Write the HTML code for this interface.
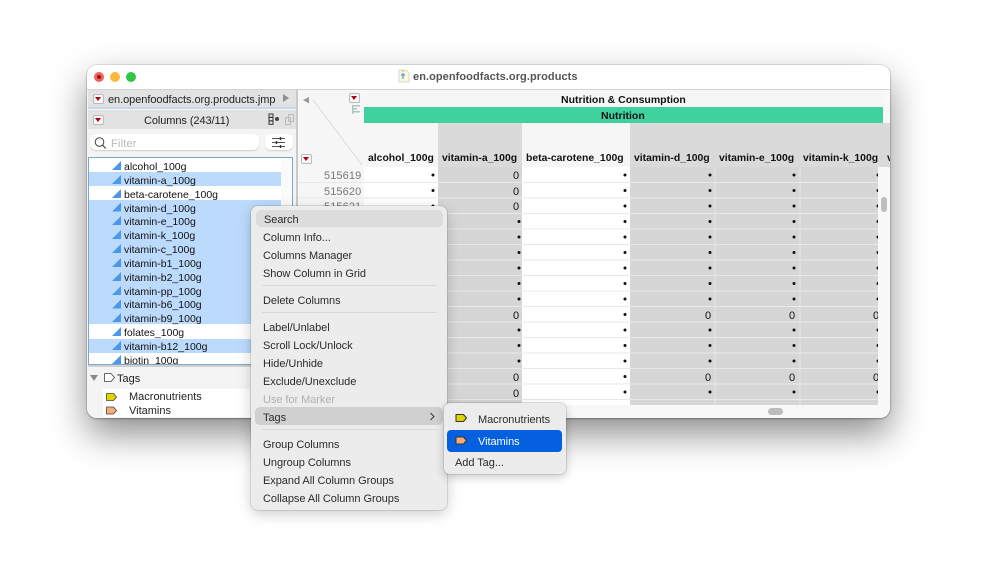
<!DOCTYPE html>
<html><head><meta charset="utf-8"><style>
html,body{margin:0;padding:0;background:#fff}
body{width:999px;height:579px;overflow:hidden;position:relative;font-family:"Liberation Sans",sans-serif;font-size:11px;color:#1a1a1a}
.a{position:absolute}
.t{position:absolute;white-space:nowrap;line-height:14px;margin-top:1px}
.rb{position:absolute;width:9px;height:8px;background:#f6f6f6;border:1px solid #bbb;border-radius:2px}
.rb:after{content:"";position:absolute;left:1px;top:2px;border-left:3.5px solid transparent;border-right:3.5px solid transparent;border-top:4px solid #b00020}
.m{position:absolute;left:263px;white-space:nowrap;line-height:14px;font-size:11px;letter-spacing:-.05px;color:#2b2b2b;margin-top:1px}
.s{position:absolute;left:262px;width:175px;height:1px;background:#d8d8d8}
.c{position:absolute;left:124px;white-space:nowrap;line-height:14px;font-size:10.5px;color:#111;margin-top:1px}
.h{position:absolute;top:151px;font-weight:bold;font-size:10.4px;line-height:14px;white-space:nowrap;color:#111;margin-top:1px}
.v{position:absolute;line-height:14px;font-size:11px;color:#111;text-align:right;margin-top:1px}
</style></head><body>
<!-- window -->
<div class="a" style="left:87px;top:65px;width:803px;height:353px;background:#f8f8f8;border-radius:10px;box-shadow:0 16px 36px rgba(0,0,0,.45),0 1px 2px rgba(0,0,0,.25),0 0 0 1px rgba(0,0,0,.08);overflow:hidden">
<div class="a" style="left:0;top:0;width:803px;height:24px;background:#fff;border-bottom:1px solid #d4d4d4"></div>
<div class="a" style="left:0;top:25px;width:209px;height:328px;background:#f4f4f4"></div>
<div class="a" style="left:209px;top:25px;width:2px;height:328px;background:#c9c9c9"></div>
</div>
<!-- traffic -->
<div class="a" style="left:94px;top:72px;width:10px;height:10px;border-radius:50%;background:#f4605a"></div>
<div class="a" style="left:97px;top:75px;width:4px;height:4px;border-radius:50%;background:#8e1a14"></div>
<div class="a" style="left:110px;top:72px;width:10px;height:10px;border-radius:50%;background:#fab93c"></div>
<div class="a" style="left:126px;top:72px;width:10px;height:10px;border-radius:50%;background:#32c648"></div>
<!-- title -->
<svg class="a" style="left:398px;top:69px" width="12" height="14"><path d="M1 1h7l3 3v9H1z" fill="#fbf8dc" stroke="#ccc" stroke-width=".7"/><path d="M5 4v6M3 6h4" stroke="#4a9bd8" stroke-width="1.2"/><path d="M4 2h2" stroke="#d8c040"/></svg>
<div class="t" style="left:413px;top:69px;font-weight:bold;font-size:11px;letter-spacing:.07px;color:#555">en.openfoodfacts.org.products</div>
<!-- left panel header -->
<div class="a" style="left:88px;top:90px;width:208px;height:17px;background:#e2e2e2"></div>
<div class="rb" style="left:93px;top:94px"></div>
<div class="t" style="left:108px;top:92px;color:#222;font-size:11px;letter-spacing:-.06px">en.openfoodfacts.org.products.jmp</div>
<div class="a" style="left:283px;top:94px;border-left:6px solid #8e8e8e;border-top:4px solid transparent;border-bottom:4px solid transparent"></div>
<div class="a" style="left:88px;top:107px;width:208px;height:2px;background:#c8d8e8"></div>
<div class="a" style="left:88px;top:110px;width:208px;height:19px;background:#e2e2e2"></div>
<div class="rb" style="left:93px;top:115px"></div>
<div class="t" style="left:144px;top:113px;color:#222;letter-spacing:-.08px">Columns (243/11)</div>
<svg class="a" style="left:268px;top:113px" width="30" height="14"><rect x="1" y="1" width="4" height="3.3" fill="none" stroke="#333"/><rect x="1" y="4.5" width="4" height="3.3" fill="none" stroke="#333"/><rect x="1" y="8" width="4" height="3.3" fill="none" stroke="#333"/><circle cx="9" cy="6" r="2" fill="#444"/><rect x="17.500" y="4.500" width="5" height="7" fill="none" stroke="#bbb"/><rect x="20.500" y="1.500" width="5" height="7" fill="none" stroke="#bbb"/></svg>
<!-- filter -->
<div class="a" style="left:90px;top:134px;width:169px;height:16px;background:#fff;border-radius:6px;box-shadow:0 1px 1px rgba(0,0,0,.15)"></div>
<svg class="a" style="left:94px;top:137px" width="13" height="13"><circle cx="5.500" cy="5" r="4.300" fill="none" stroke="#444" stroke-width="1"/><path d="M8.500 8l3.200 3.500" stroke="#444" stroke-width="1.2"/></svg>
<div class="t" style="left:111px;top:136px;color:#b8b8b8;letter-spacing:.2px">Filter</div>
<div class="a" style="left:265px;top:134px;width:28px;height:16px;background:#fff;border-radius:5px;box-shadow:0 1px 1px rgba(0,0,0,.15)"></div>
<svg class="a" style="left:271px;top:136px" width="16" height="13"><path d="M1 2.500h13M1 6.500h13M1 10.500h13" stroke="#555" stroke-width="1"/><path d="M9.500 1v3M5.500 5v3M9.500 9v3" stroke="#333" stroke-width="1.400"/></svg>
<!-- column list -->
<div class="a" style="left:88px;top:157px;width:205px;height:208px;background:#fff;border:1px solid #7da7c8;box-sizing:border-box;overflow:hidden"></div>
<div class="a" style="left:89px;top:172px;width:192px;height:14px;background:#bcdafc"></div>
<div class="a" style="left:89px;top:200px;width:192px;height:124px;background:#bcdafc"></div>
<div class="a" style="left:89px;top:339px;width:192px;height:14px;background:#bcdafc"></div>
<div class="a" style="left:281px;top:158px;width:11px;height:206px;background:#fafafa"></div>
<svg class="a" style="left:112px;top:159px" width="10" height="205"><g fill="#4a97ec"><path d="M0 11L9 2v9z"/><path d="M0 25L9 16v9z"/><path d="M0 39L9 30v9z"/><path d="M0 52.500L9 43.500v9z"/><path d="M0 66L9 57v9z"/><path d="M0 80L9 71v9z"/><path d="M0 94L9 85v9z"/><path d="M0 108L9 99v9z"/><path d="M0 122L9 113v9z"/><path d="M0 136L9 127v9z"/><path d="M0 149.500L9 140.500v9z"/><path d="M0 163L9 154v9z"/><path d="M0 177L9 168v9z"/><path d="M0 191L9 182v9z"/><path d="M0 205L9 196v9z"/></g></svg>
<div class="c" style="top:159px">alcohol_100g</div>
<div class="c" style="top:173px">vitamin-a_100g</div>
<div class="c" style="top:187px">beta-carotene_100g</div>
<div class="c" style="top:201px">vitamin-d_100g</div>
<div class="c" style="top:214px">vitamin-e_100g</div>
<div class="c" style="top:228px">vitamin-k_100g</div>
<div class="c" style="top:242px">vitamin-c_100g</div>
<div class="c" style="top:256px">vitamin-b1_100g</div>
<div class="c" style="top:270px">vitamin-b2_100g</div>
<div class="c" style="top:284px">vitamin-pp_100g</div>
<div class="c" style="top:297px">vitamin-b6_100g</div>
<div class="c" style="top:311px">vitamin-b9_100g</div>
<div class="c" style="top:325px">folates_100g</div>
<div class="c" style="top:339px">vitamin-b12_100g</div>
<div class="a" style="left:89px;top:353px;width:203px;height:11px;overflow:hidden"><div class="c" style="left:35px;top:0">biotin_100g</div></div>
<div class="a" style="left:88px;top:365px;width:208px;height:2px;background:#d0d0d0"></div>
<!-- tags -->
<div class="a" style="left:90px;top:375px;border-top:6px solid #8a8a8a;border-left:4px solid transparent;border-right:4px solid transparent"></div>
<svg class="a" style="left:104px;top:372px" width="12" height="11"><path d="M.5 1.500h6.500l3.500 4-3.500 4H.5z" fill="#fff" stroke="#444" stroke-width=".8" stroke-linejoin="round"/></svg>
<div class="t" style="left:117px;top:371px;color:#222">Tags</div>
<div class="a" style="left:103px;top:389px;width:147px;height:28px;background:#fff"></div>
<svg class="a" style="left:106px;top:392px" width="12" height="23"><path d="M.5 1.500h7l3 3.500-3 3.500h-7z" fill="#dfd500" stroke="#444" stroke-width=".8" stroke-linejoin="round"/><path d="M.5 15h7l3 3.500-3 3.500h-7z" fill="#f8ab78" stroke="#444" stroke-width=".8" stroke-linejoin="round"/></svg>
<div class="t" style="left:129px;top:389px;color:#222">Macronutrients</div>
<div class="t" style="left:129px;top:403px;color:#222">Vitamins</div>
<!-- grid -->
<div class="a" style="left:298px;top:90px;width:65px;height:77px;background:#f6f6f6"></div>
<svg class="a" style="left:298px;top:90px" width="66" height="78"><path d="M15 10L64 75" stroke="#dcdcdc" stroke-width="1" fill="none"/><path d="M54 15h1.500v9H54z" fill="#a8c8c0"/><path d="M55 15h7v1.500h-7zM55 18h4v1.500h-4zM55 21h7v1.500h-7z" fill="#a8c8c0"/><path d="M11 7L5 10l6 3.500z" fill="#999"/></svg>
<div class="rb" style="left:349px;top:93px"></div>
<div class="rb" style="left:301px;top:154px"></div>
<div class="a" style="left:364px;top:90px;width:519px;height:16px;background:#f6f6f6"></div>
<div class="t" style="left:561px;top:92px;font-weight:bold;font-size:10.5px;color:#111">Nutrition &amp; Consumption</div>
<div class="a" style="left:364px;top:107px;width:519px;height:16px;background:#40d29e"></div>
<div class="t" style="left:601px;top:108px;font-weight:bold;font-size:10.5px;color:#111">Nutrition</div>
<div class="a" style="left:364px;top:123px;width:74px;height:44px;background:#f6f6f6"></div>
<div class="a" style="left:438px;top:123px;width:84px;height:44px;background:#dadada"></div>
<div class="a" style="left:522px;top:123px;width:108px;height:44px;background:#f6f6f6"></div>
<div class="a" style="left:630px;top:123px;width:260px;height:44px;background:#dadada"></div>
<div class="h" style="left:368px">alcohol_100g</div>
<div class="h" style="left:442px">vitamin-a_100g</div>
<div class="h" style="left:526px">beta-carotene_100g</div>
<div class="h" style="left:634px">vitamin-d_100g</div>
<div class="h" style="left:719px">vitamin-e_100g</div>
<div class="h" style="left:803px">vitamin-k_100g</div>
<div class="h" style="left:887px;width:3px;overflow:hidden">v</div>
<!-- rows bg -->
<div class="a" style="left:298px;top:167px;width:65px;height:238px;background:#f6f6f6"></div>
<div class="a" style="left:364px;top:167px;width:74px;height:238px;background:#fff"></div>
<div class="a" style="left:438px;top:167px;width:84px;height:238px;background:#d6d6d6"></div>
<div class="a" style="left:522px;top:167px;width:108px;height:238px;background:#fff"></div>
<div class="a" style="left:630px;top:167px;width:84px;height:238px;background:#d6d6d6"></div>
<div class="a" style="left:714px;top:167px;width:2px;height:238px;background:#dedede"></div>
<div class="a" style="left:716px;top:167px;width:83px;height:238px;background:#d6d6d6"></div>
<div class="a" style="left:799px;top:167px;width:2px;height:238px;background:#dedede"></div>
<div class="a" style="left:801px;top:167px;width:77px;height:238px;background:#d6d6d6"></div>
<svg class="a" style="left:298px;top:167px" width="586" height="238"><g stroke="#e9e9e9" stroke-width="1"><path d="M0 15.500h580M0 31h580M0 46.500h580M0 62h580M0 77.500h580M0 93h580M0 108.500h580M0 124h580M0 139.500h580M0 155h580M0 170.500h580M0 186h580M0 201.500h580M0 217h580M0 232.500h580"/></g>
<g fill="#111"><circle cx="135" cy="8" r="1.500"/><circle cx="135" cy="23.500" r="1.500"/><circle cx="135" cy="39" r="1.500"/><circle cx="135" cy="54.500" r="1.500"/><circle cx="135" cy="70" r="1.500"/><circle cx="135" cy="85.500" r="1.500"/><circle cx="135" cy="101" r="1.500"/><circle cx="135" cy="116.500" r="1.500"/><circle cx="135" cy="132" r="1.500"/><circle cx="135" cy="147.500" r="1.500"/><circle cx="135" cy="163" r="1.500"/><circle cx="135" cy="178.500" r="1.500"/><circle cx="135" cy="194" r="1.500"/><circle cx="135" cy="209.500" r="1.500"/><circle cx="135" cy="225" r="1.500"/>
<circle cx="221" cy="54.500" r="1.500"/><circle cx="221" cy="70" r="1.500"/><circle cx="221" cy="85.500" r="1.500"/><circle cx="221" cy="101" r="1.500"/><circle cx="221" cy="116.500" r="1.500"/><circle cx="221" cy="132" r="1.500"/><circle cx="221" cy="163" r="1.500"/><circle cx="221" cy="178.500" r="1.500"/><circle cx="221" cy="194" r="1.500"/></g>
<g fill="#111"><circle cx="327" cy="8" r="1.500"/><circle cx="327" cy="23.500" r="1.500"/><circle cx="327" cy="39" r="1.500"/><circle cx="327" cy="54.500" r="1.500"/><circle cx="327" cy="70" r="1.500"/><circle cx="327" cy="85.500" r="1.500"/><circle cx="327" cy="101" r="1.500"/><circle cx="327" cy="116.500" r="1.500"/><circle cx="327" cy="132" r="1.500"/><circle cx="327" cy="147.500" r="1.500"/><circle cx="327" cy="163" r="1.500"/><circle cx="327" cy="178.500" r="1.500"/><circle cx="327" cy="194" r="1.500"/><circle cx="327" cy="209.500" r="1.500"/><circle cx="327" cy="225" r="1.500"/></g>
<g fill="#111"><circle cx="412" cy="8" r="1.500"/><circle cx="412" cy="23.500" r="1.500"/><circle cx="412" cy="39" r="1.500"/><circle cx="412" cy="54.500" r="1.500"/><circle cx="412" cy="70" r="1.500"/><circle cx="412" cy="85.500" r="1.500"/><circle cx="412" cy="101" r="1.500"/><circle cx="412" cy="116.500" r="1.500"/><circle cx="412" cy="132" r="1.500"/><circle cx="412" cy="163" r="1.500"/><circle cx="412" cy="178.500" r="1.500"/><circle cx="412" cy="194" r="1.500"/><circle cx="412" cy="225" r="1.500"/></g>
<g fill="#111"><circle cx="496" cy="8" r="1.500"/><circle cx="496" cy="23.500" r="1.500"/><circle cx="496" cy="39" r="1.500"/><circle cx="496" cy="54.500" r="1.500"/><circle cx="496" cy="70" r="1.500"/><circle cx="496" cy="85.500" r="1.500"/><circle cx="496" cy="101" r="1.500"/><circle cx="496" cy="116.500" r="1.500"/><circle cx="496" cy="132" r="1.500"/><circle cx="496" cy="163" r="1.500"/><circle cx="496" cy="178.500" r="1.500"/><circle cx="496" cy="194" r="1.500"/><circle cx="496" cy="225" r="1.500"/></g>
<g fill="#111"><circle cx="580" cy="8" r="1.500"/><circle cx="580" cy="23.500" r="1.500"/><circle cx="580" cy="39" r="1.500"/><circle cx="580" cy="54.500" r="1.500"/><circle cx="580" cy="70" r="1.500"/><circle cx="580" cy="85.500" r="1.500"/><circle cx="580" cy="101" r="1.500"/><circle cx="580" cy="116.500" r="1.500"/><circle cx="580" cy="132" r="1.500"/><circle cx="580" cy="163" r="1.500"/><circle cx="580" cy="178.500" r="1.500"/><circle cx="580" cy="194" r="1.500"/><circle cx="580" cy="225" r="1.500"/></g></svg>
<!-- cover dots beyond 878 -->
<div class="a" style="left:878px;top:167px;width:6px;height:238px;background:#f8f8f8"></div>
<div class="t" style="left:324px;top:168px;color:#777;letter-spacing:.1px">515619</div>
<div class="t" style="left:324px;top:184px;color:#777;letter-spacing:.1px">515620</div>
<div class="t" style="left:324px;top:199px;color:#777;letter-spacing:.1px">515621</div>
<div class="v" style="left:513px;top:168px">0</div>
<div class="v" style="left:513px;top:184px">0</div>
<div class="v" style="left:513px;top:199px">0</div>
<div class="v" style="left:513px;top:308px">0</div>
<div class="v" style="left:513px;top:370px">0</div>
<div class="v" style="left:513px;top:386px">0</div>
<div class="v" style="left:705px;top:308px">0</div>
<div class="v" style="left:789px;top:308px">0</div>
<div class="v" style="left:873px;top:308px;width:5px;overflow:hidden">0</div>
<div class="v" style="left:705px;top:370px">0</div>
<div class="v" style="left:789px;top:370px">0</div>
<div class="v" style="left:873px;top:370px;width:5px;overflow:hidden">0</div>
<!-- scrollbars -->
<div class="a" style="left:881px;top:197px;width:6px;height:15px;border-radius:3px;background:#bdbdbd"></div>
<div class="a" style="left:768px;top:408px;width:15px;height:7px;border-radius:3.500px;background:#bdbdbd"></div>
<!-- main menu -->
<div class="a" style="left:251px;top:206px;width:196px;height:304px;background:#ececec;border-radius:7px;box-shadow:0 4px 14px rgba(0,0,0,.2),0 0 0 1px rgba(0,0,0,.1)"></div>
<div class="a" style="left:256px;top:210px;width:187px;height:17px;background:#dcdcdc;border-radius:5px"></div>
<div class="a" style="left:255px;top:407px;width:188px;height:18px;background:#d0d0d0;border-radius:5px"></div>
<div class="m" style="left:264px;top:212px">Search</div>
<div class="m" style="top:230px">Column Info...</div>
<div class="m" style="top:248px">Columns Manager</div>
<div class="m" style="top:266px">Show Column in Grid</div>
<div class="s" style="top:285px"></div>
<div class="m" style="top:293px">Delete Columns</div>
<div class="s" style="top:312px"></div>
<div class="m" style="top:320px">Label/Unlabel</div>
<div class="m" style="top:338px">Scroll Lock/Unlock</div>
<div class="m" style="top:356px">Hide/Unhide</div>
<div class="m" style="top:374px">Exclude/Unexclude</div>
<div class="m" style="top:392px;color:#b0b0b0">Use for Marker</div>
<div class="m" style="top:410px">Tags</div>
<svg class="a" style="left:429px;top:412px" width="8" height="9"><path d="M1.500 1l3.500 3.500-3.500 3.500" fill="none" stroke="#333" stroke-width="1"/></svg>
<div class="s" style="top:429px"></div>
<div class="m" style="top:437px">Group Columns</div>
<div class="m" style="top:455px">Ungroup Columns</div>
<div class="m" style="top:473px">Expand All Column Groups</div>
<div class="m" style="top:491px">Collapse All Column Groups</div>
<!-- submenu -->
<div class="a" style="left:444px;top:403px;width:122px;height:71px;background:#ececec;border-radius:6px;box-shadow:0 3px 10px rgba(0,0,0,.22),0 0 0 1px rgba(0,0,0,.1)"></div>
<div class="a" style="left:447px;top:430px;width:115px;height:22px;background:#0460de;border-radius:4px"></div>
<svg class="a" style="left:455px;top:413px" width="13" height="34"><path d="M1 1.500h7.500l3 3.500-3 3.500H1z" fill="#dfd500" stroke="#333" stroke-linejoin="round"/><path d="M1 24h7.500l3 3.500-3 3.500H1z" fill="#f8ab78" stroke="#333" stroke-linejoin="round"/></svg>
<div class="m" style="left:478px;top:412px">Macronutrients</div>
<div class="m" style="left:478px;top:434px;color:#fff">Vitamins</div>
<div class="m" style="left:455px;top:455px">Add Tag...</div>
</body></html>
